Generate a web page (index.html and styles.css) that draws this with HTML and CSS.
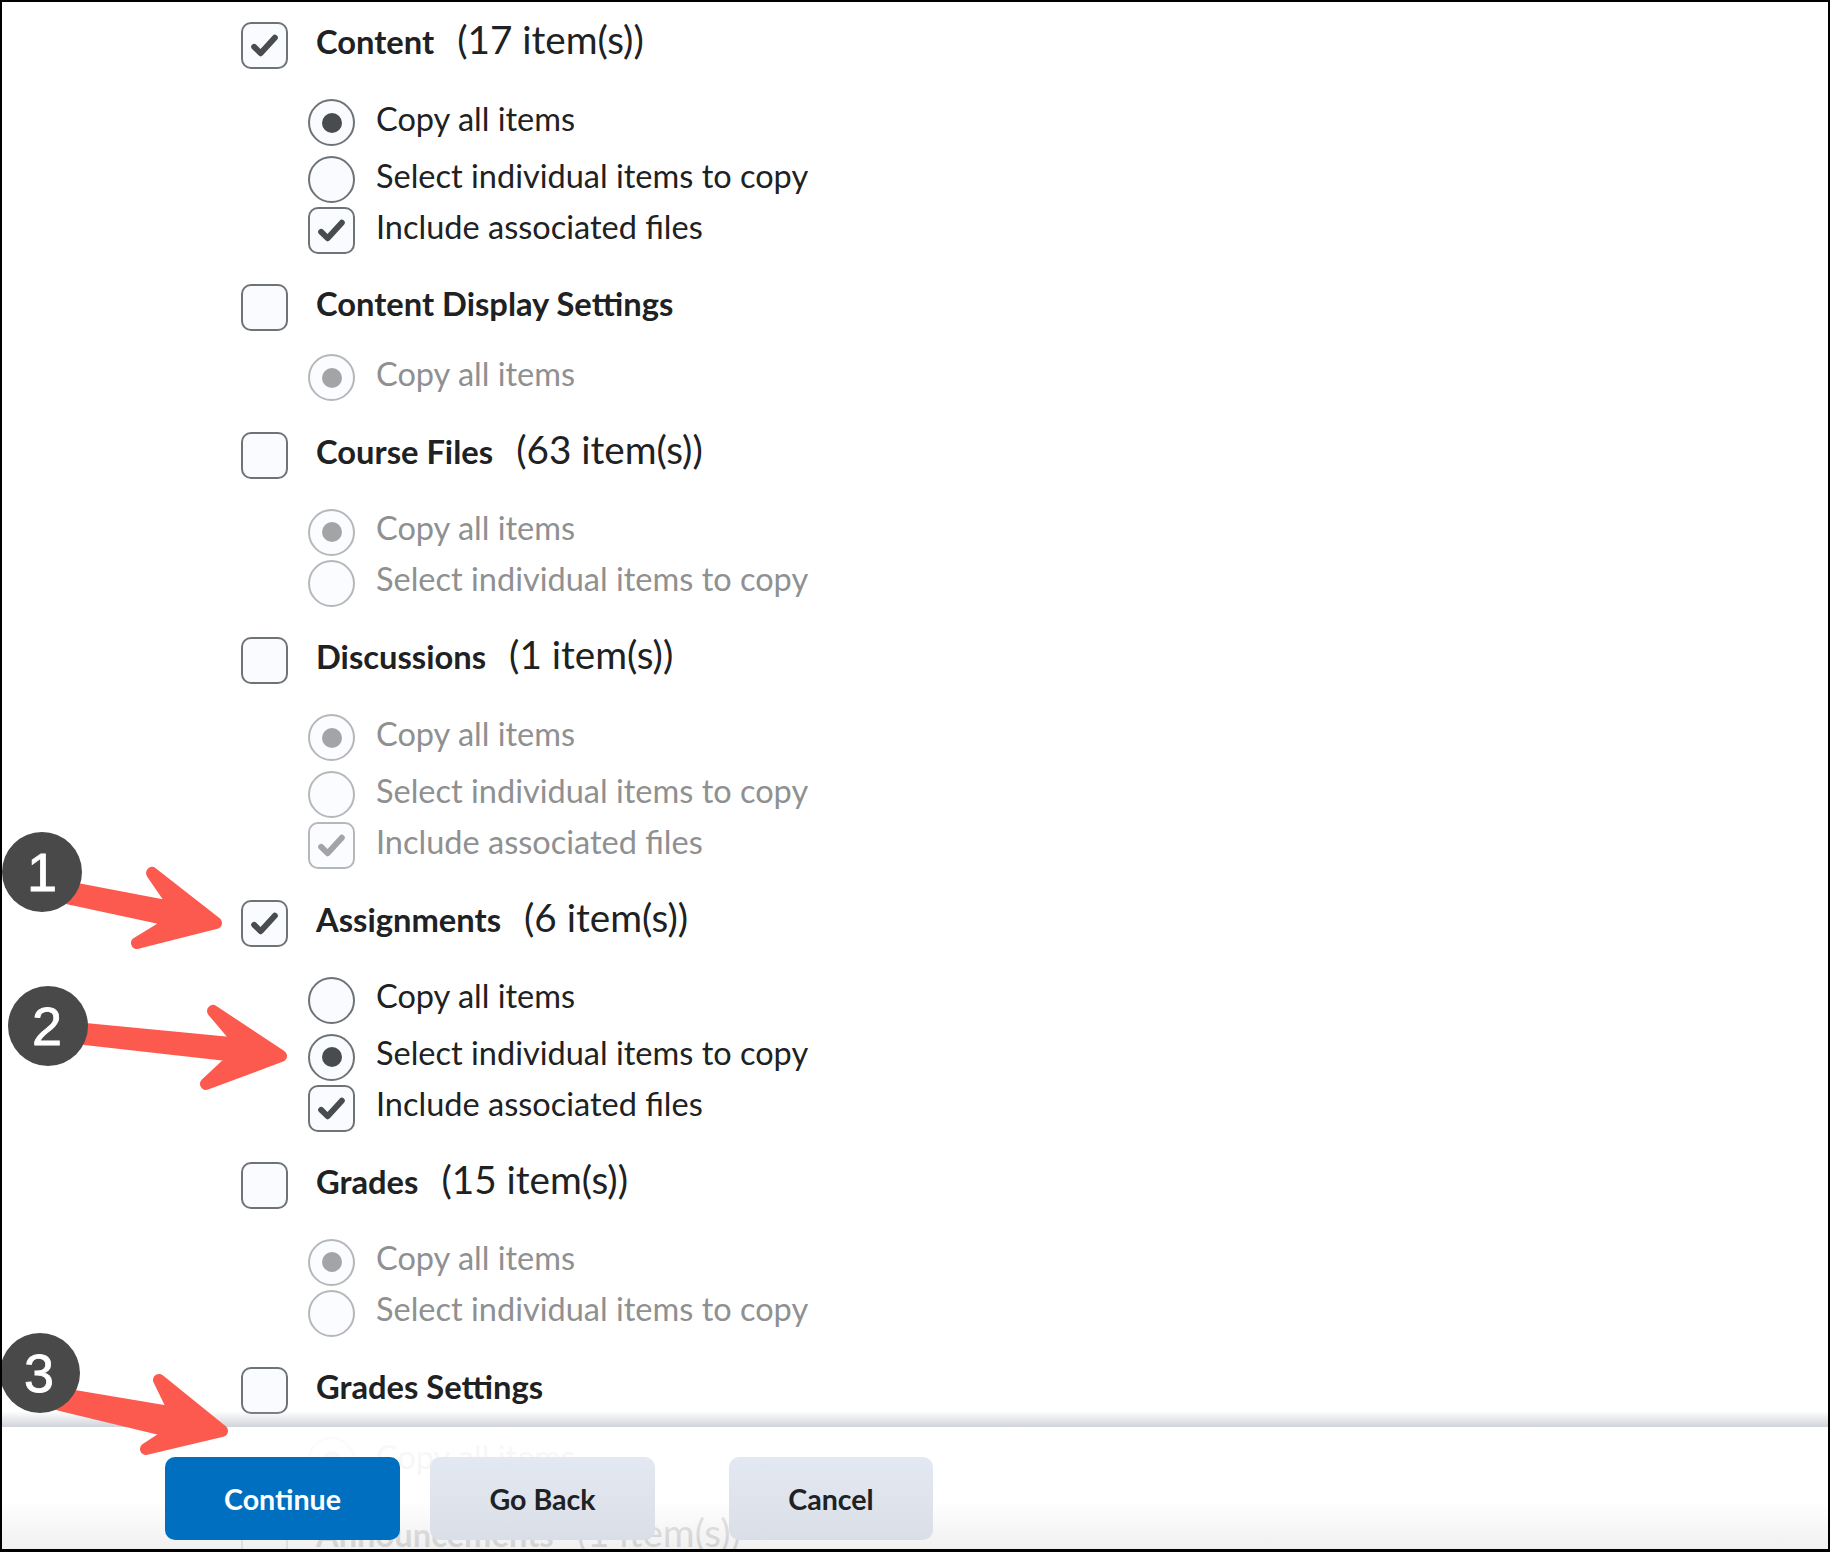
FILE: index.html
```html
<!DOCTYPE html>
<html lang="en">
<head>
<meta charset="utf-8">
<title>Copy Course Components</title>
<link rel="stylesheet" href="styles.css">
</head>
<body>
<div class="frame">
  <main class="list">
    <section class="group">
      <div class="head"><span class="box"><svg class="tick" viewBox="0 0 24 24"><path d="M4 13l5 5L20 6"/></svg></span><strong>Content</strong><span class="count">(17 item(s))</span></div>
      <div class="opts three">
        <div class="opt"><span class="radio on"></span><span class="label">Copy all items</span></div>
        <div class="opt"><span class="radio"></span><span class="label">Select individual items to copy</span></div>
        <div class="opt"><span class="box"><svg class="tick" viewBox="0 0 24 24"><path d="M4 13l5 5L20 6"/></svg></span><span class="label">Include associated files</span></div>
      </div>
    </section>
    <section class="group">
      <div class="head"><span class="box"></span><strong>Content Display Settings</strong></div>
      <div class="opts off single">
        <div class="opt"><span class="radio on"></span><span class="label">Copy all items</span></div>
      </div>
    </section>
    <section class="group">
      <div class="head"><span class="box"></span><strong>Course Files</strong><span class="count">(63 item(s))</span></div>
      <div class="opts off">
        <div class="opt"><span class="radio on"></span><span class="label">Copy all items</span></div>
        <div class="opt"><span class="radio"></span><span class="label">Select individual items to copy</span></div>
      </div>
    </section>
    <section class="group">
      <div class="head"><span class="box"></span><strong>Discussions</strong><span class="count">(1 item(s))</span></div>
      <div class="opts off three">
        <div class="opt"><span class="radio on"></span><span class="label">Copy all items</span></div>
        <div class="opt"><span class="radio"></span><span class="label">Select individual items to copy</span></div>
        <div class="opt"><span class="box"><svg class="tick" viewBox="0 0 24 24"><path d="M4 13l5 5L20 6"/></svg></span><span class="label">Include associated files</span></div>
      </div>
    </section>
    <section class="group">
      <div class="head"><span class="box"><svg class="tick" viewBox="0 0 24 24"><path d="M4 13l5 5L20 6"/></svg></span><strong>Assignments</strong><span class="count">(6 item(s))</span></div>
      <div class="opts three">
        <div class="opt"><span class="radio"></span><span class="label">Copy all items</span></div>
        <div class="opt"><span class="radio on"></span><span class="label">Select individual items to copy</span></div>
        <div class="opt"><span class="box"><svg class="tick" viewBox="0 0 24 24"><path d="M4 13l5 5L20 6"/></svg></span><span class="label">Include associated files</span></div>
      </div>
    </section>
    <section class="group">
      <div class="head"><span class="box"></span><strong>Grades</strong><span class="count">(15 item(s))</span></div>
      <div class="opts off">
        <div class="opt"><span class="radio on"></span><span class="label">Copy all items</span></div>
        <div class="opt"><span class="radio"></span><span class="label">Select individual items to copy</span></div>
      </div>
    </section>
    <section class="group">
      <div class="head"><span class="box"></span><strong>Grades Settings</strong></div>
      <div class="opts off single">
        <div class="opt"><span class="radio on"></span><span class="label">Copy all items</span></div>
      </div>
    </section>
    <section class="group">
      <div class="head"><span class="box"></span><strong>Announcements</strong><span class="count">(1 item(s))</span></div>
    </section>
  </main>

  <footer class="footer">
    <button class="btn primary">Continue</button>
    <button class="btn">Go Back</button>
    <button class="btn cancel">Cancel</button>
  </footer>

  <svg class="notes" viewBox="0 0 1830 1552" aria-hidden="true">
    <path class="arrow" d="M66 887L176 908L152 873L216 923L137 943L173 921L66 898Z"/>
    <path class="arrow" d="M85 1029L241 1044L213 1011L281 1056L206 1084L236 1056L85 1039Z"/>
    <path class="arrow" d="M62 1394L175 1413L159 1380L222 1431L146 1449L172 1432L60 1405Z"/>
    <circle class="dot" cx="42" cy="872" r="40"/>
    <circle class="dot" cx="48" cy="1026" r="40"/>
    <circle class="dot" cx="40" cy="1373" r="40"/>
    <text class="num" x="42" y="891">1</text>
    <text class="num" x="47" y="1045">2</text>
    <text class="num" x="39" y="1392">3</text>
  </svg>
</div>
</body>
</html>
```

FILE: styles.css
```css
* { box-sizing: border-box; }
html, body { margin: 0; padding: 0; background: #fff; }
body { font-family: Lato, "Noto Sans", sans-serif; color: #202122; }
.frame {
  position: relative;
  width: 1830px;
  height: 1552px;
  overflow: hidden;
  border-style: solid;
  border-color: #000;
  border-width: 2px 2px 3px 2px;
}
.list {
  display: flex;
  flex-direction: column;
  gap: 30.4px;
  padding: 20px 0 0 239px;
}
.group { display: flex; flex-direction: column; gap: 30px; }
.head { display: flex; align-items: center; height: 47px; font-size: 32.7px; }
.head strong { margin-left: 28px; margin-top: -8px; font-weight: 700; }
.count { margin-left: 23px; margin-top: -13px; font-size: 38.7px; font-weight: 400; }
.opts { display: flex; flex-direction: column; gap: 4px; margin-left: 67px; }
.opts.three .opt + .opt { margin-top: 6px; }
.opts.three .opt + .opt + .opt { margin-top: 0; }
.opts.single { margin-top: -7px; }
.opt { display: flex; align-items: center; height: 47px; font-size: 32.5px; }
.label { margin-bottom: 9px; }
.opt .radio, .opt .box { margin-right: 21px; }
.opts.off { color: #8f9091; }
.opts.off .radio, .opts.off .box { opacity: .5; }
.box, .radio {
  flex: none;
  display: flex;
  align-items: center;
  justify-content: center;
  width: 47px;
  height: 47px;
  background: #f9fbff;
  border: 2px solid #6e7376;
}
.box { border-radius: 10px; }
.radio { border-radius: 50%; }
.radio.on::after {
  content: "";
  width: 20px;
  height: 20px;
  border-radius: 50%;
  background: #494c4f;
}
.tick { width: 31px; height: 31px; fill: none; stroke: #494c4f; stroke-width: 4.6; stroke-linecap: round; stroke-linejoin: round; }
.footer {
  position: absolute;
  left: 0;
  right: 0;
  top: 1425px;
  bottom: 0;
  display: flex;
  padding: 30px 0 0 163px;
  gap: 30px;
  background: linear-gradient(rgba(255,255,255,.95), rgba(255,255,255,.9) 60%, rgba(238,238,239,.86));
}
.footer::before {
  content: "";
  position: absolute;
  left: 0;
  right: 0;
  top: -16px;
  height: 16px;
  background: linear-gradient(rgba(214,217,223,0), #d0d3da);
}
.btn {
  height: 83px;
  width: 225px;
  border: 0;
  border-radius: 10px;
  font: 700 28.6px Lato, "Noto Sans", sans-serif;
  color: #202122;
  background: linear-gradient(#e3e9f2, #dadee7);
}
.btn.primary { width: 235px; background: #006fbf; color: #fff; }
.btn.cancel { width: 204px; margin-left: 44px; }
.notes { position: absolute; left: -2px; top: -2px; width: 1830px; height: 1552px; pointer-events: none; clip-path: inset(0 0 96px 0); }
.arrow { fill: #fc5a4e; stroke: #fc5a4e; stroke-width: 12px; stroke-linejoin: round; }
.dot { fill: #494949; }
.num { font: 400 54px "Liberation Sans", sans-serif; fill: #fff; stroke: #fff; stroke-width: .8px; text-anchor: middle; }
```
